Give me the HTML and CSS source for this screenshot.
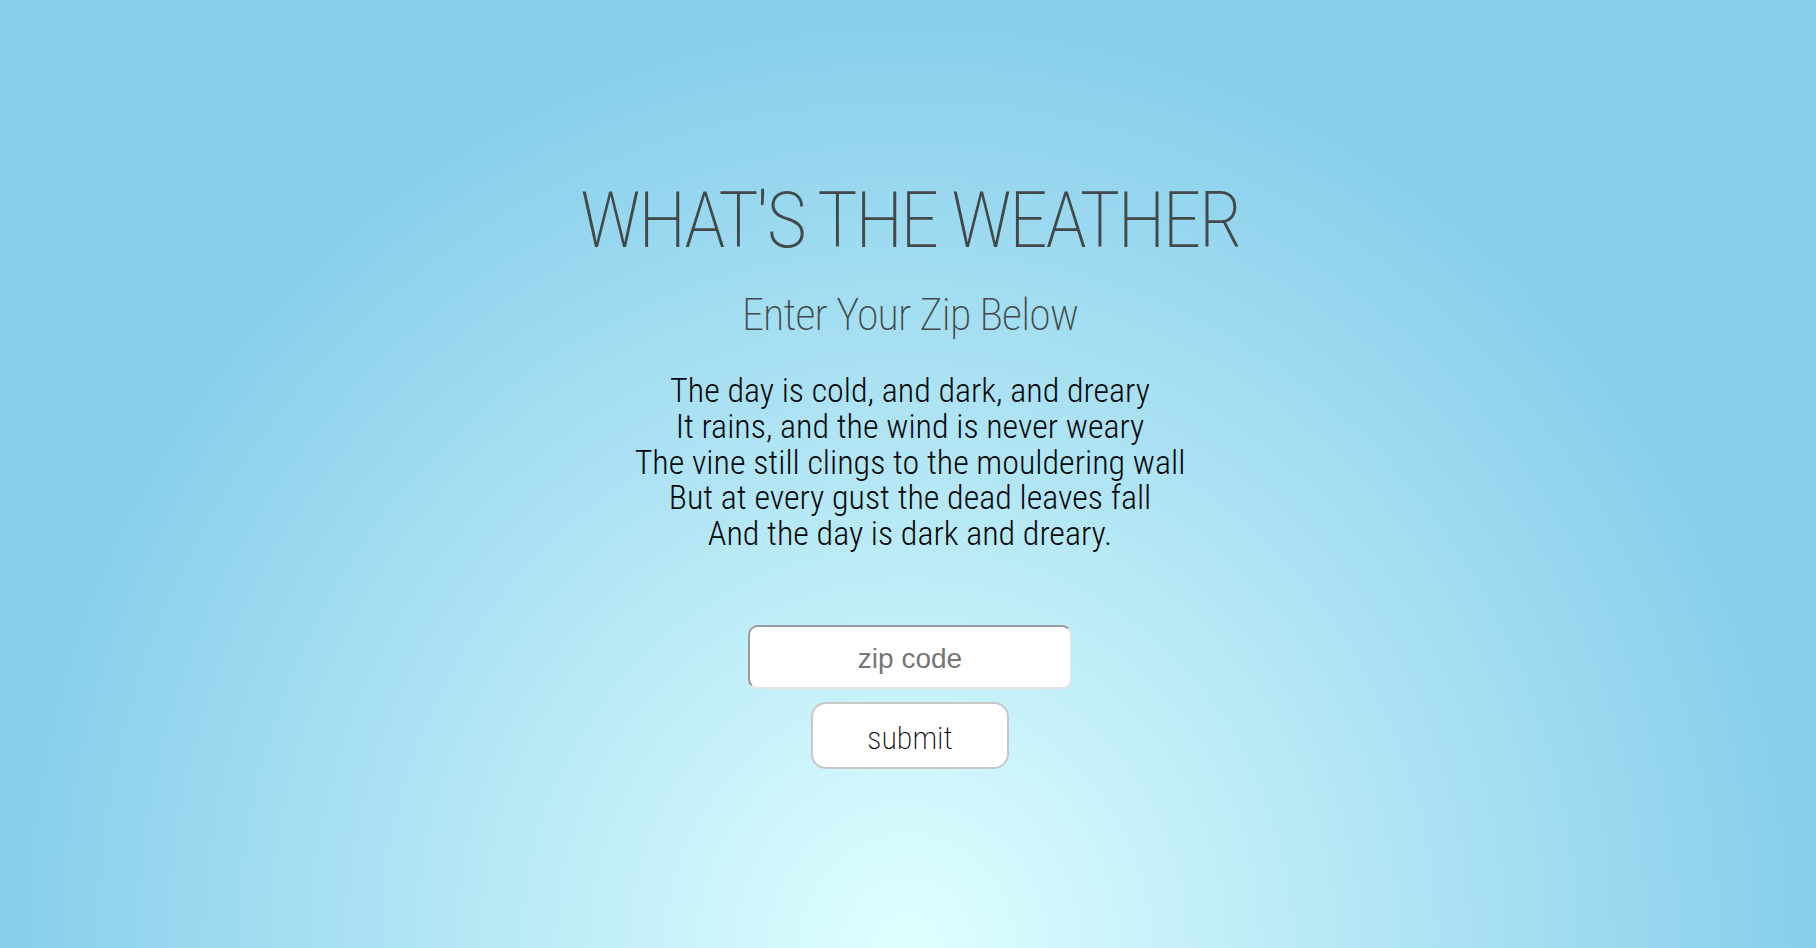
FILE: index.html
```html
<!DOCTYPE html>
<html lang="en">
<head>
<meta charset="utf-8">
<title>What's the Weather</title>
<link rel="stylesheet" href="styles.css">
</head>
<body>
<main class="page">
  <h1 class="title">WHAT'S THE WEATHER</h1>
  <h2 class="subtitle">Enter Your Zip Below</h2>
  <p class="poem">The day is cold, and dark, and dreary<br>It rains, and the wind is never weary<br>The vine still clings to the mouldering wall<br>But at every gust the dead leaves fall<br>And the day is dark and dreary.</p>
  <form class="zip-form">
    <input class="zip-input" type="text" placeholder="zip code">
    <button class="submit-btn" type="button">submit</button>
  </form>
</main>
</body>
</html>
```
FILE: styles.css
```css
html, body {
  margin: 0;
  height: 100%;
}
body {
  background: radial-gradient(50% 100% at 50% 100%, #e0ffff 0%, #87ceeb 100%);
  background-color: #87ceeb;
  font-family: "Roboto Condensed", "Roboto", sans-serif;
  overflow: hidden;
}
.page {
  display: flex;
  flex-direction: column;
  align-items: center;
  text-align: center;
  padding-top: 182px;
  padding-left: 4px;
}
.title {
  margin: 0;
  font-size: 78px;
  line-height: 78px;
  font-weight: 200;
  letter-spacing: -2.8px;
  color: #434848;
}
.subtitle {
  margin: 33px 0 0;
  font-size: 44px;
  line-height: 44px;
  font-weight: 200;
  letter-spacing: -0.8px;
  color: #434848;
}
.poem {
  margin: 36px 0 0;
  font-size: 34px;
  line-height: 35.8px;
  font-weight: 270;
  color: #05090b;
}
.zip-form {
  display: flex;
  flex-direction: column;
  align-items: center;
  gap: 13px;
  margin-top: 73px;
}
.zip-input {
  box-sizing: border-box;
  width: 324px;
  height: 64px;
  margin: 0;
  padding: 4px 10px 0;
  border: 2px solid;
  border-color: #9a9a9a #e4e4e4 #e4e4e4 #9a9a9a;
  border-radius: 10px;
  background: #fff;
  font-family: "Liberation Sans", Arial, sans-serif;
  font-size: 28px;
  text-align: center;
  color: #333;
  outline: none;
}
.zip-input::placeholder {
  color: #767676;
}
.submit-btn {
  box-sizing: border-box;
  width: 198px;
  height: 67px;
  margin: 0;
  padding: 5px 0 0;
  border: 2px solid #c8c8c8;
  border-radius: 15px;
  background: #fff;
  font-family: "Roboto Condensed", "Roboto", sans-serif;
  font-size: 32px;
  font-weight: 250;
  color: #000;
  cursor: pointer;
}
```
